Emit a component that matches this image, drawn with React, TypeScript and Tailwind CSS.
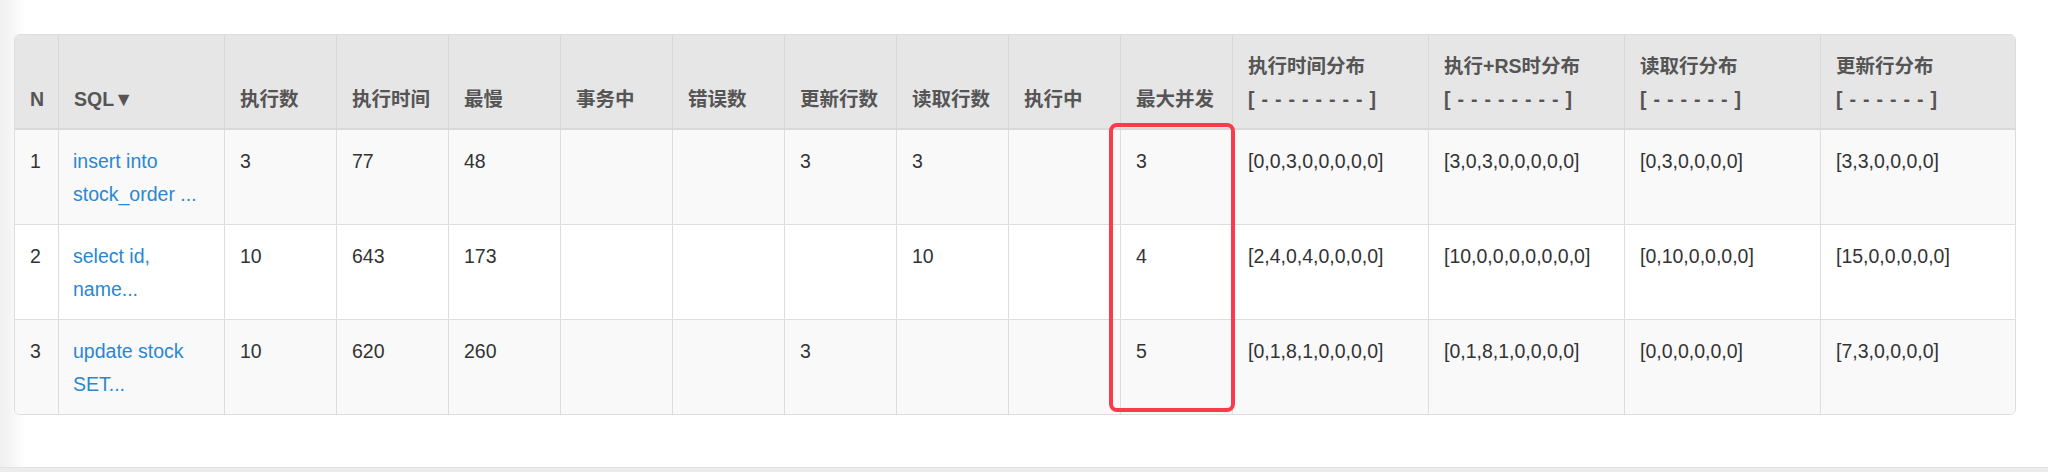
import React from 'react';

interface SqlRow {
  n: number;
  sql: [string, string];
  execCount: string;
  execTime: string;
  slowest: string;
  inTx: string;
  errors: string;
  updated: string;
  fetched: string;
  running: string;
  concurrent: string;
  timeHisto: string;
  rsHisto: string;
  fetchHisto: string;
  updateHisto: string;
}

const ROWS: SqlRow[] = [
  {
    n: 1, sql: ['insert into', 'stock_order ...'], execCount: '3', execTime: '77', slowest: '48',
    inTx: '', errors: '', updated: '3', fetched: '3', running: '', concurrent: '3',
    timeHisto: '[0,0,3,0,0,0,0,0]', rsHisto: '[3,0,3,0,0,0,0,0]', fetchHisto: '[0,3,0,0,0,0]', updateHisto: '[3,3,0,0,0,0]',
  },
  {
    n: 2, sql: ['select id,', 'name...'], execCount: '10', execTime: '643', slowest: '173',
    inTx: '', errors: '', updated: '', fetched: '10', running: '', concurrent: '4',
    timeHisto: '[2,4,0,4,0,0,0,0]', rsHisto: '[10,0,0,0,0,0,0,0]', fetchHisto: '[0,10,0,0,0,0]', updateHisto: '[15,0,0,0,0,0]',
  },
  {
    n: 3, sql: ['update stock', 'SET...'], execCount: '10', execTime: '620', slowest: '260',
    inTx: '', errors: '', updated: '3', fetched: '', running: '', concurrent: '5',
    timeHisto: '[0,1,8,1,0,0,0,0]', rsHisto: '[0,1,8,1,0,0,0,0]', fetchHisto: '[0,0,0,0,0,0]', updateHisto: '[7,3,0,0,0,0]',
  },
];

const DASH8 = '[ - - - - - - - - ]';
const DASH6 = '[ - - - - - - ]';

// header cells: label, optional second line, width
const HEADERS: { label: string; sub?: string; w: string }[] = [
  { label: 'N', w: 'w-[43px]' },
  { label: 'SQL▼', w: 'w-[166px]' },
  { label: '执行数', w: 'w-[112px]' },
  { label: '执行时间', w: 'w-[112px]' },
  { label: '最慢', w: 'w-[112px]' },
  { label: '事务中', w: 'w-[112px]' },
  { label: '错误数', w: 'w-[112px]' },
  { label: '更新行数', w: 'w-[112px]' },
  { label: '读取行数', w: 'w-[112px]' },
  { label: '执行中', w: 'w-[112px]' },
  { label: '最大并发', w: 'w-[112px]' },
  { label: '执行时间分布', sub: DASH8, w: 'w-[196px]' },
  { label: '执行+RS时分布', sub: DASH8, w: 'w-[196px]' },
  { label: '读取行分布', sub: DASH6, w: 'w-[196px]' },
  { label: '更新行分布', sub: DASH6, w: 'w-[195px]' },
];

const App: React.FC = () => {
  return (
    <div
      className="relative flex h-[472px] w-[2048px] flex-col bg-[linear-gradient(to_right,#efefef,#ffffff_26px)] text-[19.5px] leading-[33px] text-[#333]"
      style={{ fontFamily: '"Liberation Sans", "Noto Sans CJK SC", sans-serif' }}
    >
      <div className="pl-[14px] pt-[34px]">
        <div className="w-[2002px] overflow-hidden rounded-[6px] border border-[#ddd] bg-white">
          <table className="w-full table-fixed border-separate border-spacing-0">
            <thead>
              <tr className="bg-[#e6e6e6]">
                {HEADERS.map((h, i) => (
                  <th
                    key={h.label}
                    className={`${h.w} border-b-2 border-[#d9d9d9] px-[15px] pt-[15px] pb-[12px] text-left align-bottom font-bold text-[#555] ${i > 0 ? 'border-l' : ''}`}
                  >
                    <div>{h.label}</div>
                    {h.sub && <div className="whitespace-pre tracking-[0.8px]">{h.sub}</div>}
                  </th>
                ))}
              </tr>
            </thead>
            <tbody>
              {ROWS.map((r, idx) => {
                const cells = [
                  r.execCount, r.execTime, r.slowest, r.inTx, r.errors, r.updated, r.fetched,
                  r.running, r.concurrent, r.timeHisto, r.rsHisto, r.fetchHisto, r.updateHisto,
                ];
                const rowBg = idx % 2 === 0 ? 'bg-[#f9f9f9]' : 'bg-white';
                const top = idx > 0 ? 'border-t' : '';
                return (
                  <tr key={r.n} className={rowBg}>
                    <td className={`${top} border-[#ddd] px-[15px] pt-[15px] pb-[13px] align-top`}>{r.n}</td>
                    <td className={`${top} border-l border-[#ddd] px-[14px] pt-[15px] pb-[13px] align-top`}>
                      <a className="text-[#2a87d0]">
                        {r.sql[0]}
                        <br />
                        {r.sql[1]}
                      </a>
                    </td>
                    {cells.map((c, ci) => (
                      <td
                        key={ci}
                        className={`${top} border-l border-[#ddd] px-[15px] pt-[15px] pb-[13px] align-top whitespace-nowrap`}
                      >
                        {c}
                      </td>
                    ))}
                  </tr>
                );
              })}
            </tbody>
          </table>
        </div>
      </div>

      <div className="flex-1" />
      <div className="h-[5px] border-t border-[#e2e2e2] bg-[#ececec]" />

      {/* annotation box round the max concurrency column */}
      <div className="pointer-events-none absolute left-[1109px] top-[123px] h-[289px] w-[126px] rounded-[8px] border-[4px] border-[#fb3a4b]" />
    </div>
  );
};

export default App;
